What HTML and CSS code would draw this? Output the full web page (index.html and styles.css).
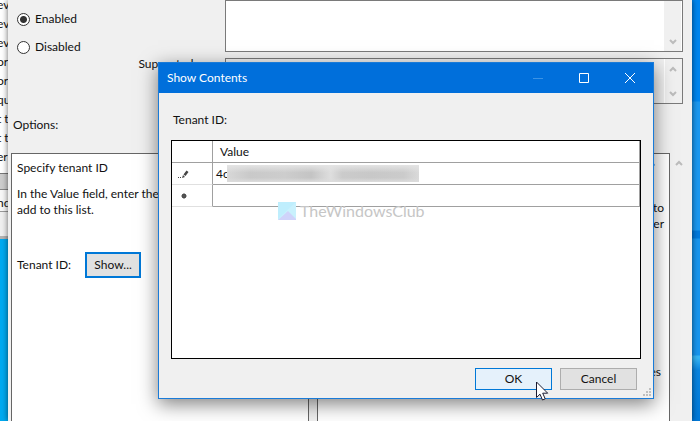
FILE: index.html
```html
<!DOCTYPE html>
<html lang="en">
<head>
    <meta charset="UTF-8">
    <meta name="viewport" content="width=device-width, initial-scale=1.0">
    <title>Show Contents</title>
    <link rel="stylesheet" href="styles.css">
</head>
<body>
    <div class="desktop">
        <!-- Editor window behind the policy window -->
        <div class="back-window">
            <ul class="back-list">
                <li>ev</li>
                <li>ev</li>
                <li>ev</li>
                <li>or</li>
                <li>or</li>
                <li>qu</li>
                <li>t t</li>
                <li>t t</li>
                <li>er</li>
            </ul>
            <div class="back-scroll"></div>
            <div class="back-tab">nd</div>
        </div>

        <!-- Policy window -->
        <div class="policy-window">
            <form class="policy-top">
                <div class="states">
                    <label><input type="radio" name="state" checked> Enabled</label>
                    <label><input type="radio" name="state"> Disabled</label>
                </div>
                <div class="field">
                    <textarea aria-label="Comment"></textarea>
                    <div class="scrollbar">
                        <svg width="8" height="6" viewBox="0 0 8 6"><path d="M1 1l3 3 3-3"/></svg>
                    </div>
                </div>
                <label class="supported" for="supported">Supported on:</label>
                <div class="field">
                    <textarea id="supported" readonly></textarea>
                    <div class="scrollbar">
                        <svg width="8" height="6" viewBox="0 0 8 6"><path d="M1 5l3-3 3 3"/></svg>
                        <svg width="8" height="6" viewBox="0 0 8 6"><path d="M1 1l3 3 3-3"/></svg>
                    </div>
                </div>
            </form>
            <div class="options-label">Options:</div>
            <div class="panels">
                <div class="panel">
                    <p>Specify tenant ID</p>
                    <p class="hint">In the Value field, enter the<br>add to this list.</p>
                    <div class="tenant-row">
                        <span>Tenant ID:</span>
                        <button class="show-btn" type="button">Show...</button>
                    </div>
                </div>
                <div class="panel help">
                    <svg class="link-mark" width="4" height="5" viewBox="0 0 4 5"><path d="M0 0h2l2 3-2 2H0z" fill="#2f9cf0"/></svg>
                    <p>to<br>user</p>
                    <p class="help-end">es</p>
                </div>
                <div class="scrollbar">
                    <svg width="8" height="6" viewBox="0 0 8 6"><path d="M1 5l3-3 3 3"/></svg>
                </div>
            </div>
        </div>

        <!-- Show Contents dialog -->
        <div class="dialog" role="dialog" aria-labelledby="dialog-title">
            <div class="titlebar">
                <span class="title" id="dialog-title">Show Contents</span>
                <button class="win-btn" type="button" aria-label="Minimize" disabled>
                    <svg width="12" height="12" viewBox="0 0 12 12"><path d="M1 6.500h10"/></svg>
                </button>
                <button class="win-btn" type="button" aria-label="Maximize">
                    <svg width="12" height="12" viewBox="0 0 12 12"><path d="M1.500 1.500h9v9h-9z"/></svg>
                </button>
                <button class="win-btn" type="button" aria-label="Close">
                    <svg width="12" height="12" viewBox="0 0 12 12"><path d="M1 1l10 10M11 1L1 11"/></svg>
                </button>
            </div>
            <div class="dialog-body">
                <div class="grid-label" id="grid-label">Tenant ID:</div>
                <div class="grid-box">
                    <table aria-labelledby="grid-label">
                        <thead>
                            <tr><th class="row-head"></th><th>Value</th></tr>
                        </thead>
                        <tbody>
                            <tr>
                                <td class="row-head">
                                    <svg width="12" height="10" viewBox="0 0 12 10">
                                        <path d="M1 8h1v1H1zM3 8h1v1H3zM5 9l1-3 2 2zM6.500 5.500l3-4 2 1.500-3 4z" fill="#444"/>
                                    </svg>
                                </td>
                                <td><div class="value">4c<span class="redacted"></span></div></td>
                            </tr>
                            <tr>
                                <td class="row-head">
                                    <svg width="12" height="8" viewBox="0 0 12 8">
                                        <circle cx="7" cy="4" r="2.200" fill="#444"/>
                                        <path d="M7 1v6M4 4h6M5 2l4 4M9 2L5 6" stroke="#555" stroke-width=".8"/>
                                    </svg>
                                </td>
                                <td></td>
                            </tr>
                        </tbody>
                    </table>
                </div>
                <div class="actions">
                    <button class="btn btn-ok" type="button">OK</button>
                    <button class="btn" type="button">Cancel</button>
                </div>
            </div>
            <svg class="grip" width="8" height="8" viewBox="0 0 8 8">
                <path d="M6 0h2v2H6zM3 3h2v2H3zM6 3h2v2H6zM0 6h2v2H0zM3 6h2v2H3zM6 6h2v2H6z" fill="#bfbfbf"/>
            </svg>
            <div class="watermark">
                <svg width="18" height="18" viewBox="0 0 18 18">
                    <path d="M0 0h18v18H0z" fill="#c9f1fd"/>
                    <path d="M0 0h18L0 17z" fill="#bfeefd"/>
                    <path d="M0 18l10-9 8 8v1z" fill="#cfd3fa"/>
                </svg>
                <span>TheWindowsClub</span>
            </div>
            <svg class="cursor" width="13" height="20" viewBox="0 0 13 20">
                <path d="M.500 1v15.500l3.500-3.300 2.500 5.800 2.700-1.200-2.500-5.600h5z" fill="#fff" stroke="#1b1b30"/>
            </svg>
        </div>
    </div>
</body>
</html>
```

FILE: styles.css
```css
* {
    box-sizing: border-box;
}
body {
    margin: 0;
    font-family: Lato, "Open Sans", sans-serif;
    font-size: 12px;
    line-height: 16px;
    color: #111;
}
p, ul {
    margin: 0;
    padding: 0;
}
button, textarea {
    font: inherit;
    color: inherit;
}
.desktop {
    position: relative;
    height: 100vh;
    overflow: hidden;
    background: linear-gradient(#0086ef 0 101px, #1b98f0 102px 230px, #0079dc 231px 238px, #1795ee 239px 355px, #35b5f5 356px 358px, #0a85e0 370px, #0078d8);
}
.desktop::before {
    content: "";
    display: block;
    width: 50%;
    height: 100%;
    background: #00aaf1;
}

/* back window */
.back-window {
    position: absolute;
    top: 0;
    left: 0;
    width: 40px;
    height: 239px;
    background: #f0f0f0;
    border-bottom: 3px solid #b4b4b4;
}
.back-list {
    height: 174px;
    background: #fff;
    border-bottom: 1px solid #777;
    list-style: none;
    overflow: hidden;
}
.back-list li {
    height: 19px;
    line-height: 10px;
    text-indent: -3px;
}
.back-scroll {
    height: 16px;
    background: #cdcdcd;
    border-bottom: 1px solid #888;
}
.back-tab {
    height: 22px;
    line-height: 26px;
    text-indent: -3px;
    border-bottom: 1px solid #999;
    background: #f8f8f8;
}

/* policy window */
.policy-window {
    position: absolute;
    top: 0;
    bottom: 0;
    left: 8px;
    right: 8px;
    display: flex;
    flex-direction: column;
    background: #f0f0f0;
    box-shadow: 0 0 6px rgba(0, 0, 0, 0.6);
}
.policy-top {
    display: grid;
    grid-template-columns: 209px 1fr;
    grid-template-rows: 52px 46px;
    gap: 6px 8px;
    padding-right: 9px;
}
.states {
    display: flex;
    flex-direction: column;
    gap: 12px;
    padding: 11px 9px 0;
}
.states label {
    display: flex;
    align-items: center;
    gap: 5px;
    height: 16px;
}
.states input {
    appearance: none;
    flex: none;
    width: 13px;
    height: 13px;
    margin: 0;
    border: 1px solid #333;
    border-radius: 50%;
    background: #fff;
}
.states input:checked {
    background: radial-gradient(circle, #333 3px, #fff 4px);
}
.supported {
    padding-right: 4px;
    text-align: right;
    line-height: 12px;
}
.field {
    display: flex;
    border: 1px solid #7a7a7a;
    background: #fff;
    padding-right: 1px;
}
.field textarea {
    flex: 1;
    min-width: 0;
    border: none;
    padding: 0;
    resize: none;
    overflow: hidden;
    background: transparent;
    outline: none;
}
.field:last-child {
    background: #f0f0f0;
}
.scrollbar {
    display: flex;
    flex-direction: column;
    justify-content: space-between;
    align-items: center;
    width: 17px;
    padding: 7px 0 6px;
    background: #f0f0f0;
}
.field .scrollbar svg:only-child {
    margin-top: auto;
}
.field:last-child .scrollbar {
    border-left: 1px solid #fff;
}
.scrollbar path {
    fill: none;
    stroke: #bcbcbc;
    stroke-width: 2;
}
.options-label {
    padding: 13px 5px 20px;
}
.panels {
    flex: 1;
    display: grid;
    grid-template-columns: 298px 1fr 17px;
    padding: 0 5px 0 3px;
}
.panel {
    border: 1px solid #666;
    border-bottom: none;
    background: #fff;
    padding: 6px 5px;
}
.panel .hint {
    padding: 10px 0 34px;
}
.tenant-row {
    display: flex;
    align-items: center;
    gap: 14px;
}
.show-btn {
    width: 56px;
    height: 26px;
    padding: 0;
    border: 2px solid #0078d7;
    background: #e1e1e1;
}
.help {
    margin-left: 8px;
    padding-top: 8px;
    text-align: right;
}
.link-mark {
    display: block;
    margin: 0 9px 33px auto;
}
.help-end {
    padding: 132px 3px 0 0;
}

/* dialog */
.dialog {
    position: absolute;
    top: 62px;
    left: 158px;
    right: 46px;
    border: 1px solid #1a7bd8;
    background: #f0f0f0;
    box-shadow: 0 5px 18px rgba(0, 0, 0, 0.5);
}
.titlebar {
    display: flex;
    height: 30px;
    background: #006fdb;
    color: #fff;
}
.title {
    flex: 1;
    padding-left: 8px;
    line-height: 30px;
}
.win-btn {
    display: flex;
    align-items: center;
    justify-content: center;
    width: 46px;
    padding: 0;
    border: none;
    background: none;
}
.win-btn path {
    fill: none;
    stroke: #fff;
}
.win-btn:disabled path {
    stroke: #3b93e6;
}
.dialog-body {
    padding: 18px 12px 8px;
}
.grid-label {
    padding: 1px 2px 12px;
}
.grid-box {
    height: 219px;
    border: 1px solid #000;
    background: #fff;
}
table {
    width: 100%;
    border-spacing: 0;
    font-size: 12px;
    table-layout: fixed;
}
th, td {
    height: 22px;
    padding: 0 3px;
    border-right: 1px solid #a0a0a0;
    border-bottom: 1px solid #a0a0a0;
    font-weight: normal;
    text-align: left;
}
th {
    padding-left: 7px;
}
td.row-head {
    border-bottom-color: #e0e0e0;
}
.row-head {
    width: 41px;
    padding: 0 5px;
}
.row-head svg {
    display: block;
}
.value {
    display: flex;
    align-items: center;
}
.redacted {
    width: 192px;
    height: 17px;
    margin-left: -2px;
    background:
        linear-gradient(#e4e4e4, transparent 45% 75%, #dcdcdc),
        linear-gradient(90deg, #d8d8d8, #c9c9c9 12%, #cdcdcd 30%, #c4c4c4 44%, #d4d4d4 50%, #dedede 54%, #cbcbcb 60%, #c8c8c8 75%, #cbcbcb 92%, #dadada);
}
.actions {
    display: flex;
    justify-content: flex-end;
    gap: 8px;
    padding: 9px 4px 0;
}
.btn {
    width: 77px;
    height: 22px;
    padding: 0;
    border: 1px solid #adadad;
    background: #e1e1e1;
}
.btn-ok {
    border-color: #0078d7;
    background: #e5f1fb;
}
.grip {
    position: absolute;
    right: 2px;
    bottom: 2px;
}
.watermark {
    position: absolute;
    top: 139px;
    left: 119px;
    display: flex;
    align-items: center;
    gap: 4px;
    font-size: 16px;
    line-height: 18px;
    color: #c6c6c6;
}
.cursor {
    position: absolute;
    right: 104px;
    bottom: -3px;
}
```
